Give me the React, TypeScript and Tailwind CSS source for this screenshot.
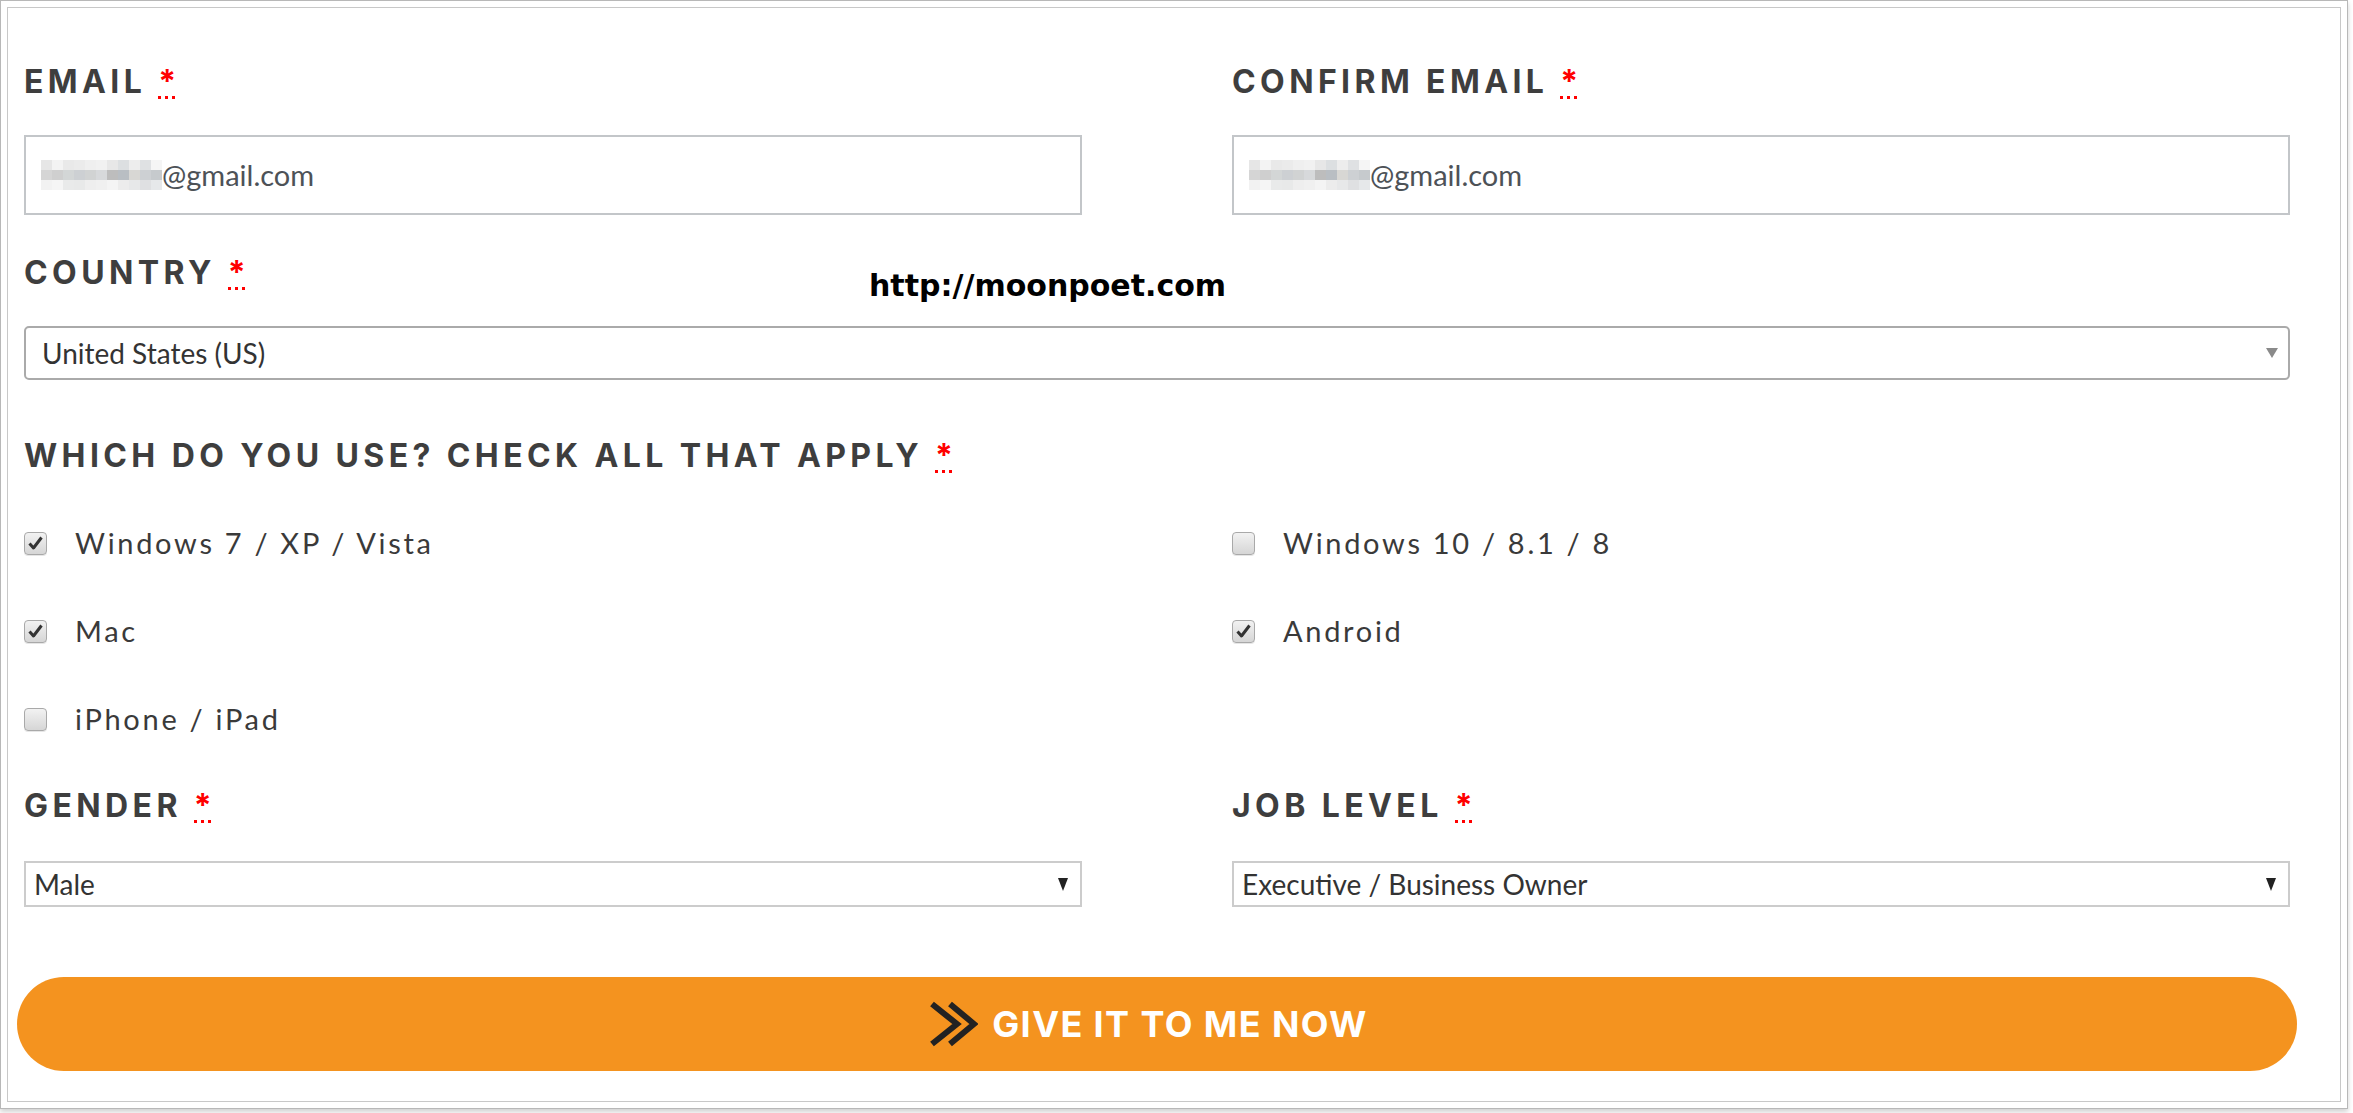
import React from 'react'

const LABEL_FONT = { fontFamily: '"Inter", "Liberation Sans", sans-serif' }
const BODY_FONT = { fontFamily: 'Lato, "Liberation Sans", sans-serif' }

// pixelated blur that hides the user name in the screenshot
const BLUR_ROWS = [
  ['#e6e6e6', '#f3f3f3', '#e9e9e9', '#ebebeb', '#efefef', '#f1f1f1', '#e7e7e7', '#dcdfe1', '#ededed', '#dfe1e3', '#f5f5f5'],
  ['#d5d5d5', '#cfcfcf', '#d3d6d6', '#cdd0d3', '#d1d3d3', '#d7d9db', '#bdbdbd', '#b9bec3', '#d8d7d4', '#cdd0d3', '#c6cacd'],
  ['#f2f2f2', '#f5f5f5', '#e9eaea', '#e8e9e9', '#eeeeee', '#f0f0f0', '#f4f4f4', '#ececec', '#e7e8e9', '#dfe0e2', '#e6e8ea'],
]

function Blur() {
  return (
    <div className="flex flex-col">
      {BLUR_ROWS.map((row, i) => (
        <div key={i} className="flex">
          {row.map((c, j) => (
            <div key={j} className="w-[11px] h-[10px]" style={{ backgroundColor: c }} />
          ))}
        </div>
      ))}
    </div>
  )
}

function Label({ text }: { text: string }) {
  return (
    <div
      className="h-[32px] leading-[32px] text-[32px] font-bold tracking-[4.4px] text-[#3e3e3e] whitespace-nowrap"
      style={LABEL_FONT}
    >
      {text}{' '}
      <span className="relative inline-block text-[#ff0000] tracking-normal">
        *
        {/* dotted abbr underline */}
        <span className="absolute left-0 top-[30px] flex gap-[4px]">
          <span className="w-[3px] h-[3px] bg-[#ff0000]" />
          <span className="w-[3px] h-[3px] bg-[#ff0000]" />
          <span className="w-[3px] h-[3px] bg-[#ff0000]" />
        </span>
      </span>
    </div>
  )
}

function EmailInput() {
  return (
    <div className="h-[80px] border-2 border-[#c3c6c9] bg-white flex items-center pl-[15px]">
      <Blur />
      <span className="text-[29px] text-[#4d5257]" style={BODY_FONT}>@gmail.com</span>
    </div>
  )
}

function Checkbox({ checked, label }: { checked: boolean; label: string }) {
  return (
    <div className="h-[40px] flex items-center">
      <div className="w-[23px] h-[23px] rounded-[4px] border border-[#a9a9a9] bg-gradient-to-b from-[#f2f2f2] to-[#d6d6d6] shadow-[0_1px_0_#e6e6e6] flex items-center justify-center">
        {checked && (
          <svg width="15" height="14" viewBox="0 0 15 14">
            <path d="M1.5 7.5 L5.5 12 L13.5 1.5" fill="none" stroke="#333" strokeWidth="3" strokeLinejoin="round" />
          </svg>
        )}
      </div>
      <span className="ml-[28px] text-[29px] leading-[40px] tracking-[2.7px] text-[#3a3a3a]" style={BODY_FONT}>
        {label}
      </span>
    </div>
  )
}

function PlainSelect({ value }: { value: string }) {
  return (
    <div className="h-[46px] border-2 border-[#cccccc] bg-white flex items-center justify-between pl-[8px] pr-[12px]">
      <span className="text-[28px] text-[#333]" style={BODY_FONT}>{value}</span>
      <svg width="10" height="13" viewBox="0 0 10 13">
        <path d="M0 0 H10 L5 13 Z" fill="#222" />
      </svg>
    </div>
  )
}

export default function App() {
  return (
    <div className="w-[2353px] h-[1113px] bg-white overflow-hidden">
      <div className="w-[2348px] h-[1109px] border border-[#b8b8b8] shadow-[0_3px_5px_rgba(0,0,0,0.18)] p-[6px]">
        <div className="relative h-full border border-[#c8c8c8] pl-[16px] pt-[58px]">
          {/* watermark */}
          <div
            className="absolute left-[861px] top-[260px] text-[30px] leading-[36px] font-bold text-black whitespace-nowrap"
            style={{ fontFamily: '"DejaVu Sans", Verdana, sans-serif' }}
          >
            http://moonpoet.com
          </div>

          <div className="w-[2266px]">
            <div className="grid grid-cols-2 gap-x-[150px]">
              <div>
                <Label text="EMAIL" />
                <div className="mt-[37px]">
                  <EmailInput />
                </div>
              </div>
              <div>
                <Label text="CONFIRM EMAIL" />
                <div className="mt-[37px]">
                  <EmailInput />
                </div>
              </div>
            </div>

            <div className="mt-[42px]">
              <Label text="COUNTRY" />
            </div>
            <div className="mt-[37px] h-[54px] rounded-[5px] border-2 border-[#aaaaaa] bg-white flex items-center justify-between pl-[16px] pr-[10px]">
              <span className="text-[28px] text-[#333]" style={BODY_FONT}>United States (US)</span>
              <svg width="12" height="10" viewBox="0 0 12 10">
                <path d="M0 0 H12 L6 10 Z" fill="#8a8a8a" />
              </svg>
            </div>

            <div className="mt-[60px]">
              <Label text="WHICH DO YOU USE? CHECK ALL THAT APPLY" />
            </div>
            <div className="mt-[51px] grid grid-cols-2 gap-x-[150px] gap-y-[48px]">
              <Checkbox checked label="Windows 7 / XP / Vista" />
              <Checkbox checked={false} label="Windows 10 / 8.1 / 8" />
              <Checkbox checked label="Mac" />
              <Checkbox checked label="Android" />
              <Checkbox checked={false} label="iPhone / iPad" />
            </div>

            <div className="mt-[51px] grid grid-cols-2 gap-x-[150px]">
              <div>
                <Label text="GENDER" />
                <div className="mt-[39px]">
                  <PlainSelect value="Male" />
                </div>
              </div>
              <div>
                <Label text="JOB LEVEL" />
                <div className="mt-[39px]">
                  <PlainSelect value="Executive / Business Owner" />
                </div>
              </div>
            </div>

            <button className="mt-[70px] -ml-[7px] w-[2280px] h-[94px] rounded-full bg-[#f4931f] flex items-center justify-center pr-[18px]">
              <svg width="50" height="46" viewBox="0 0 50 46" className="mr-[14px]">
                <path d="M4 3 L29 23 L4 43" fill="none" stroke="#222" strokeWidth="6" />
                <path d="M22 3 L46 23 L22 43" fill="none" stroke="#222" strokeWidth="6" />
              </svg>
              <span
                className="text-[36px] leading-[40px] font-bold tracking-[1.4px] text-white"
                style={LABEL_FONT}
              >
                GIVE IT TO ME NOW
              </span>
            </button>
          </div>
        </div>
      </div>
    </div>
  )
}
